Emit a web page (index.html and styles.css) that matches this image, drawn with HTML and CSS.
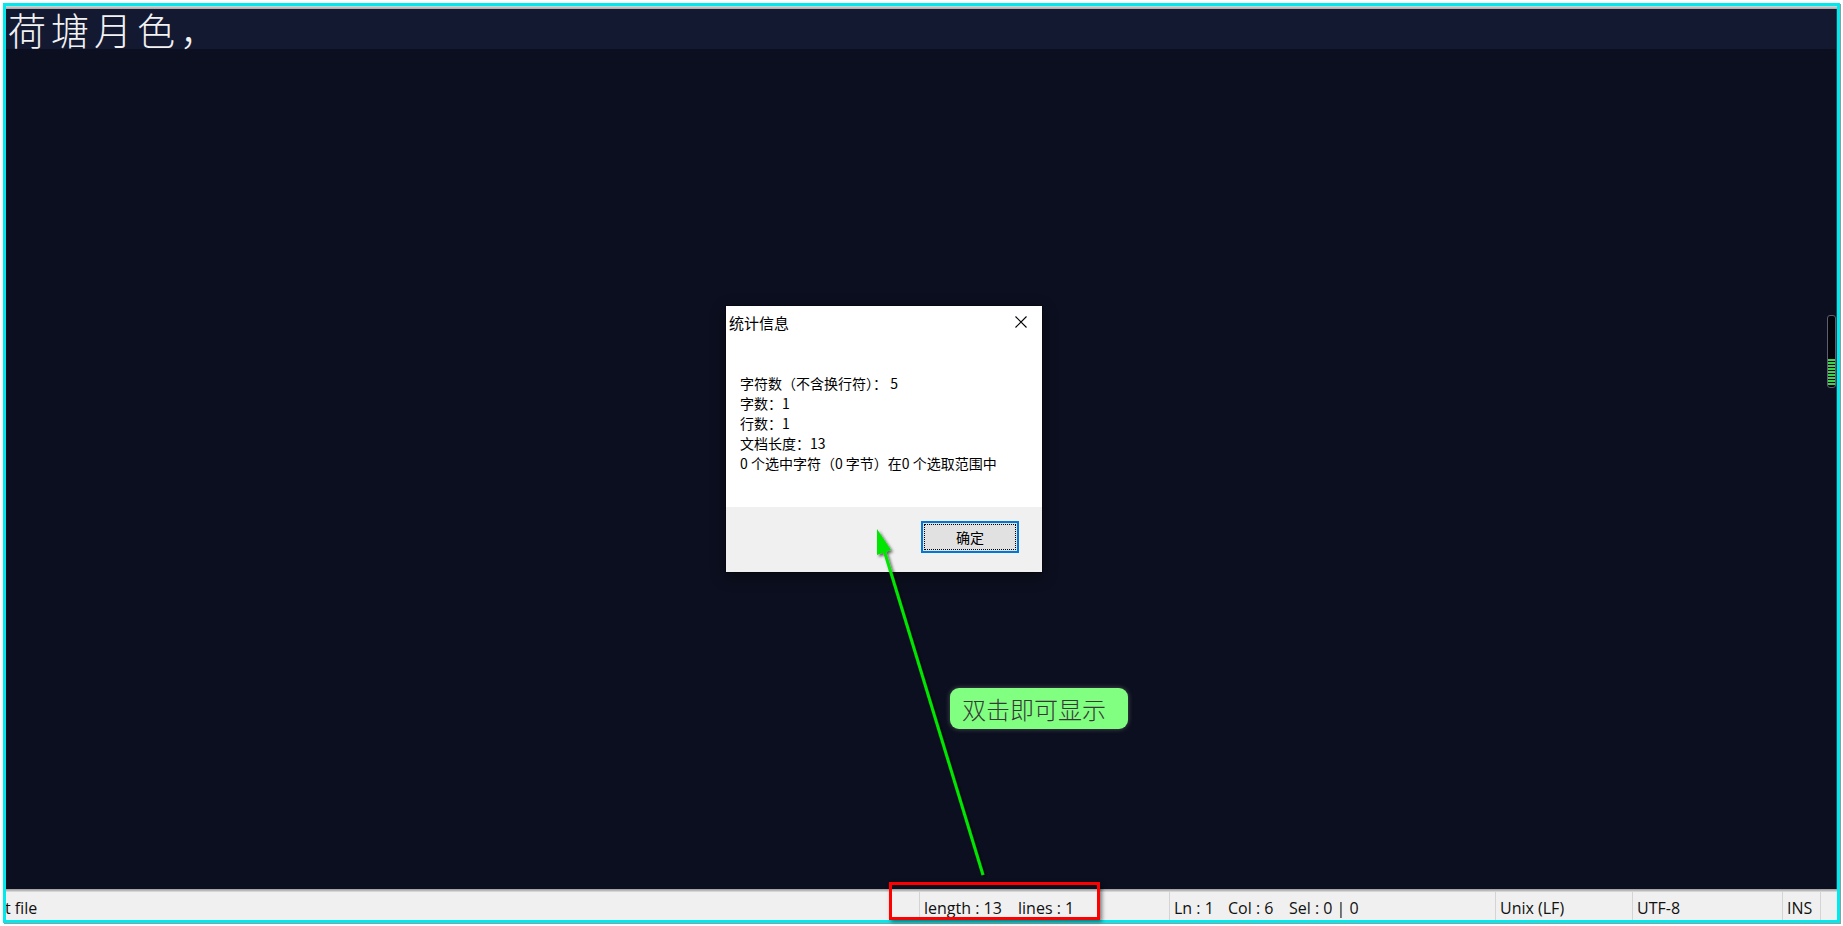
FILE: index.html
```html
<!DOCTYPE html>
<html lang="zh-CN">
<head>
<meta charset="utf-8">
<title>荷塘月色</title>
<link rel="stylesheet" href="styles.css">
</head>
<body>
<div class="frame">
  <div class="topline"></div>
  <div class="editor">
    <div class="curline"><span class="doc-text">荷塘月色，</span></div>
    <div class="minimap"><div class="minimap-fill"></div></div>
  </div>
  <div class="status-sep"></div>
  <div class="statusbar">
    <div class="sb sb-type"><span class="type-text">t file</span></div>
    <div class="sb sb-len"><span class="w-len">length : 13</span><span>lines : 1</span></div>
    <div class="sb sb-pos"><span class="w-ln">Ln : 1</span><span class="w-col">Col : 6</span><span>Sel : 0 | 0</span></div>
    <div class="sb sb-eol"><span>Unix (LF)</span></div>
    <div class="sb sb-enc"><span>UTF-8</span></div>
    <div class="sb sb-ins"><span>INS</span></div>
    <div class="sb sb-end"></div>
  </div>
</div>

<div class="dialog">
  <div class="dlg-title">
    <span class="dlg-title-text">统计信息</span>
    <span class="dlg-close">
      <svg width="12" height="12" viewBox="0 0 12 12"><path d="M0.5 0.5 L11.5 11.5 M11.5 0.5 L0.5 11.5" stroke="#000" stroke-width="1.1" fill="none"/></svg>
    </span>
  </div>
  <div class="dlg-body">
    <div>字符数（不含换行符）<span class="punc">：</span> 5</div>
    <div>字数<span class="punc">：</span>1</div>
    <div>行数<span class="punc">：</span>1</div>
    <div>文档长度<span class="punc">：</span>13</div>
    <div>0 个选中字符（0 字节）在0 个选取范围中</div>
  </div>
  <div class="dlg-foot">
    <div class="btn">确定</div>
  </div>
</div>

<div class="callout">双击即可显示</div>
<div class="redbox"></div>

<svg class="arrow" width="1843" height="926" viewBox="0 0 1843 926">
  <defs>
    <filter id="sh" x="-20%" y="-20%" width="140%" height="140%">
      <feDropShadow dx="2" dy="2" stdDeviation="1.5" flood-color="#000" flood-opacity="0.6"/>
    </filter>
  </defs>
  <g filter="url(#sh)">
    <line x1="983" y1="875" x2="884" y2="550" stroke="#00e600" stroke-width="3"/>
    <polygon points="877,529 891,550 877,555" fill="#00e600"/>
  </g>
</svg>
</body>
</html>
```

FILE: styles.css
```css
html, body {
  margin: 0;
  padding: 0;
}

body {
  width: 1843px;
  height: 926px;
  background: #ffffff;
  position: relative;
  overflow: hidden;
  font-family: "Open Sans", "Noto Sans CJK SC", sans-serif;
}

.frame {
  margin: 3px 0 0 3px;
  width: 1831px;
  height: 914px;
  border: 3px solid #00eaee;
  display: flex;
  flex-direction: column;
  box-shadow: 1px 1px 0 #9a9a9a;
}

.topline {
  height: 3px;
  background: linear-gradient(#d6d6d6, #a6a6a6);
}

.editor {
  height: 880px;
  background: #0c0f1f;
  position: relative;
  border-right: 1px solid #3a3f55;
}

.curline {
  height: 40px;
  background: #141932;
  padding-left: 2px;
  display: flex;
  align-items: center;
}

.doc-text {
  font-family: "Noto Sans CJK SC", sans-serif;
  font-size: 38px;
  font-weight: 300;
  line-height: 40px;
  letter-spacing: 5px;
  color: #f2f2f2;
}

.minimap {
  position: absolute;
  right: 0;
  top: 306px;
  width: 7px;
  height: 71px;
  border: 1px solid #5e6072;
  border-radius: 3px;
  background: #04050b;
}

.minimap-fill {
  position: absolute;
  left: 0;
  right: 0;
  bottom: 2px;
  height: 26px;
  background: repeating-linear-gradient(to bottom, #3fd24e 0 2px, transparent 2px 3px);
}

.status-sep {
  height: 3px;
  background: linear-gradient(#9a9a9a, #c4c4c4 66%, #e4e4e4);
}

.statusbar {
  height: 28px;
  background: #f0f0f0;
  display: flex;
  font-size: 16px;
  color: #111111;
}

.sb {
  display: flex;
  align-items: center;
  padding-left: 4px;
  padding-top: 3px;
  border-left: 1px solid #d4d4d4;
  box-sizing: border-box;
  white-space: nowrap;
  overflow: hidden;
}

.sb-type {
  width: 913px;
  border-left: none;
  padding-left: 0;
}

.type-text {
  margin-left: -1px;
}

.sb-len { width: 250px; }
.sb-pos { width: 326px; }
.sb-eol { width: 137px; }
.sb-enc { width: 150px; }
.sb-ins { width: 38px; }
.sb-end { flex: 1; }

.w-len { display: inline-block; width: 94px; }
.w-ln { display: inline-block; width: 54px; }
.w-col { display: inline-block; width: 61px; }

.dialog {
  position: absolute;
  left: 726px;
  top: 306px;
  width: 316px;
  height: 266px;
  background: #ffffff;
  display: flex;
  flex-direction: column;
  font-family: "Noto Sans CJK SC", sans-serif;
  font-size: 14px;
  color: #000;
  box-shadow: 0 0 0 1px rgba(0, 0, 0, 0.3), 0 4px 14px rgba(0, 0, 0, 0.45);
}

.dlg-title {
  height: 32px;
  display: flex;
  align-items: center;
  justify-content: space-between;
  padding-left: 3px;
}

.dlg-title-text {
  font-size: 15px;
}

.dlg-close {
  width: 42px;
  height: 32px;
  display: flex;
  align-items: center;
  justify-content: center;
}

.dlg-body {
  flex: 1;
  padding: 35px 0 0 14px;
  line-height: 20px;
}

.punc {
  font-family: "Noto Sans CJK TC", sans-serif;
}

.dlg-foot {
  height: 65px;
  background: #f0f0f0;
  display: flex;
  justify-content: flex-end;
  align-items: flex-start;
  padding: 14px 23px 0 0;
  box-sizing: border-box;
}

.btn {
  width: 98px;
  height: 32px;
  box-sizing: border-box;
  border: 2px solid #0078d7;
  background: #e1e1e1;
  display: flex;
  align-items: center;
  justify-content: center;
  position: relative;
}

.btn::after {
  content: "";
  position: absolute;
  inset: 1px;
  border: 1px dotted #000;
}

.callout {
  position: absolute;
  left: 950px;
  top: 688px;
  width: 178px;
  height: 41px;
  box-sizing: border-box;
  padding-left: 12px;
  background: #80ff80;
  border-radius: 9px;
  box-shadow: 0 0 5px rgba(200, 220, 200, 0.35);
  font-family: "Noto Sans CJK SC", sans-serif;
  font-size: 24px;
  font-weight: 300;
  line-height: 41px;
  color: #383838;
}

.redbox {
  position: absolute;
  left: 889px;
  top: 882px;
  width: 211px;
  height: 38px;
  box-sizing: border-box;
  border: 3px solid #ff0000;
  box-shadow: 2px 2px 4px rgba(0, 0, 0, 0.5);
}

.arrow {
  position: absolute;
  left: 0;
  top: 0;
  pointer-events: none;
}
```
